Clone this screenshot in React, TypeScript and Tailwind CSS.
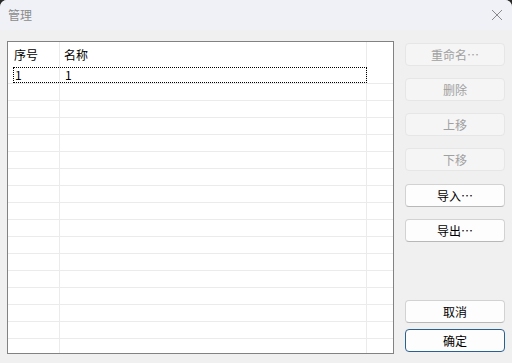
import React from 'react';

const font = { fontFamily: '"Microsoft YaHei", "Noto Sans CJK SC", "Noto Sans", sans-serif' };

const buttons = [
  { label: '重命名…', disabled: true, mt: 'mt-0' },
  { label: '删除', disabled: true, mt: 'mt-[12px]' },
  { label: '上移', disabled: true, mt: 'mt-[12px]' },
  { label: '下移', disabled: true, mt: 'mt-[12px]' },
  { label: '导入…', disabled: false, mt: 'mt-[13px]' },
  { label: '导出…', disabled: false, mt: 'mt-[12px]' },
];

const Btn: React.FC<{ label: string; disabled?: boolean; primary?: boolean; className?: string }> = ({ label, disabled, primary, className }) => (
  <button
    className={`w-[100px] h-[23px] rounded-[4px] text-[12px] leading-none flex items-center justify-center border ${
      disabled
        ? 'bg-[#f5f5f5] border-[#e6e6e6] text-[#a0a0a0]'
        : primary
        ? 'bg-[#fdfdfd] border-[#2b6190] text-black'
        : 'bg-[#fdfdfd] border-[#d2d2d2] border-b-[#b8b8b8] text-black'
    } ${className ?? ''}`}
  >
    {label}
  </button>
);

const App: React.FC = () => {
  const rows = Array.from({ length: 16 }, (_, i) => i);

  return (
    <div className="w-[512px] h-[363px] bg-[#2a2a2a] overflow-hidden" style={font}>
      <div className="w-full h-full rounded-t-[7px] bg-[#f0f0f0] flex flex-col overflow-hidden">
        {/* Title bar */}
        <div className="h-[30px] shrink-0 bg-[#eff1f6] flex items-center justify-between pl-[8px] pr-[9px]">
          <span className="text-[12px] text-[#8c8c8c]">管理</span>
          <svg width="12" height="12" viewBox="0 0 12 12" className="text-[#8a8a8a]">
            <path d="M1 1 L11 11 M11 1 L1 11" stroke="currentColor" strokeWidth="1" fill="none" />
          </svg>
        </div>

        {/* Body */}
        <div className="flex-1 flex pl-[7px] pt-[11px] pb-[9px]">
          {/* List */}
          <div className="w-[387px] h-[313px] shrink-0 bg-white border border-[#828282] flex flex-col text-[12px] text-black">
            {/* Header */}
            <div className="h-[25px] flex shrink-0">
              <div className="w-[52px] pl-[6px] border-r border-[#ebebeb] flex items-center">序号</div>
              <div className="w-[307px] pl-[4px] border-r border-[#ebebeb] flex items-center">名称</div>
              <div className="flex-1" />
            </div>
            {rows.map((i) => (
              <div key={i} className="h-[17px] flex shrink-0 border-b border-[#ebebeb] relative">
                <div className="w-[52px] pl-[7px] border-r border-[#ebebeb] flex items-center">{i === 0 ? '1' : ''}</div>
                <div className="w-[307px] pl-[5px] border-r border-[#ebebeb] flex items-center">{i === 0 ? '1' : ''}</div>
                <div className="flex-1" />
                {i === 0 && (
                  <div className="absolute left-[5px] top-0 w-[354px] h-[16px] border border-dotted border-black" />
                )}
              </div>
            ))}
            <div className="flex-1 flex">
              <div className="w-[52px] border-r border-[#ebebeb]" />
              <div className="w-[307px] border-r border-[#ebebeb]" />
              <div className="flex-1" />
            </div>
          </div>

          {/* Buttons */}
          <div className="ml-[11px] pt-[2px] pb-[2px] flex flex-col">
            {buttons.map((b) => (
              <Btn key={b.label} label={b.label} disabled={b.disabled} className={b.mt} />
            ))}
            <div className="flex-1" />
            <Btn label="取消" />
            <Btn label="确定" primary className="mt-[6px]" />
          </div>
        </div>
      </div>
    </div>
  );
};

export default App;
